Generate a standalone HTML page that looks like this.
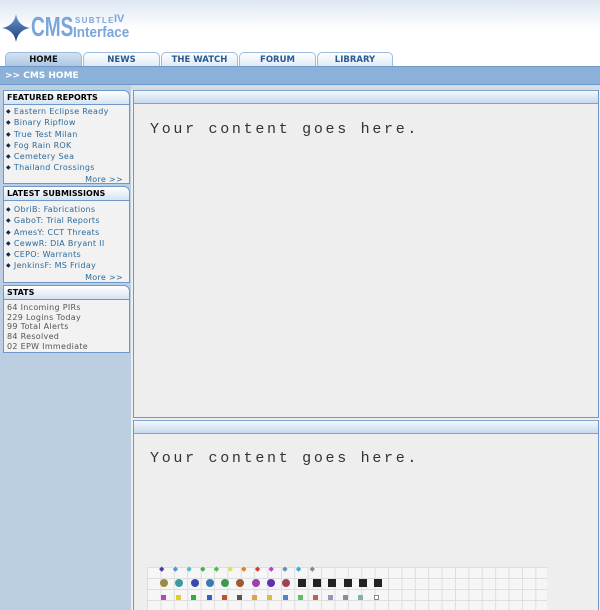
<!DOCTYPE html>
<html><head><meta charset="utf-8"><style>
*{margin:0;padding:0;box-sizing:border-box}
body{width:600px;height:610px;overflow:hidden;background:#eeeeee;font-family:"DejaVu Sans","Liberation Sans",sans-serif;position:relative}
.hdr{position:absolute;left:0;top:0;width:600px;height:66px;background:linear-gradient(#dde7f3,#ffffff 45%,#fff)}
.logo{position:absolute;left:31px;top:11px;font:bold 28px "Liberation Sans",sans-serif;color:#7aa6da;transform:scaleX(.68);transform-origin:left}
.sub{position:absolute;left:75px;top:16px;font:bold 8px "Liberation Sans",sans-serif;color:#7aa6da;letter-spacing:1.3px}
.iv{position:absolute;left:114px;top:13px;font:bold 11px "Liberation Sans",sans-serif;color:#7aa6da}
.intf{position:absolute;left:73px;top:24px;font:bold 15px "Liberation Sans",sans-serif;color:#7aa6da;transform:scaleX(.9);transform-origin:left}
.tab{position:absolute;top:52px;height:15px;border:1px solid #9dbbe0;border-bottom:none;border-radius:5px 5px 0 0;background:linear-gradient(#fff,#dde8f4);font:bold 8.5px "DejaVu Sans",sans-serif;color:#2a5a92;text-align:center;line-height:15px}
.tab.on{background:linear-gradient(#d4e2f1,#a9c4e3);color:#111}
.nav{position:absolute;left:0;top:66px;width:600px;height:19px;background:#8cb1d8;border-top:1px solid #6f98c8;border-bottom:1px solid #6f98c8;color:#fff;font:bold 9px "DejaVu Sans",sans-serif;line-height:18px;padding-left:5px}
.side{position:absolute;left:0;top:85px;width:131px;height:525px;background:#bccee2}
.strip{position:absolute;left:131px;top:85px;width:469px;height:5px;background:#d4dde6}
.box{position:absolute;left:3px;width:127px;border:1px solid #6f98c8;border-radius:0 6px 0 0;background:#f2f2f2}
.box h3{height:14px;border-bottom:1px solid #6f98c8;background:linear-gradient(#fff,#d6e3f2);font:bold 8px "DejaVu Sans",sans-serif;color:#000;line-height:14px;padding-left:3px;border-radius:0 6px 0 0}
.box ul{list-style:none;padding:1px 0 0 2px}
.box li{font:8px "DejaVu Sans",sans-serif;letter-spacing:.3px;color:#2d6b9a;height:11.3px;line-height:11px;white-space:nowrap}
.box li:before{content:"◆";font-size:6px;color:#0e2a55;margin-right:3px;vertical-align:1px}
.more{font:8px "DejaVu Sans",sans-serif;letter-spacing:.3px;color:#2d6b9a;text-align:right;padding-right:6px;line-height:11px}
.stats div{font:8px "DejaVu Sans",sans-serif;letter-spacing:.3px;color:#555;line-height:9.7px;padding-left:3px}
.panel{position:absolute;left:133px;width:466px;background:#eeeeee;border:1px solid #6f98c8;border-top:none}
.ph{height:14px;background:linear-gradient(#f4f8fc,#c6d9ee);border-top:1px solid #7ea3d0;border-bottom:1px solid #7ea3d0}
.txt{position:absolute;left:16px;font:15px "Liberation Mono",monospace;color:#333;letter-spacing:2.7px}
.grid{position:absolute;left:147px;top:567px;width:400px;height:43px;background-color:#f6f6f6;background-image:linear-gradient(90deg,#dedede 1px,transparent 1px),linear-gradient(#dedede 1px,transparent 1px);background-size:13.4px 100%,100% 11px}
.row{position:absolute;white-space:nowrap;font-size:0;line-height:0}
.row span{display:inline-block}
.b span{width:8px;height:8px;border-radius:50%;margin-right:7.3px}
.b span.q{border-radius:0;background:#222}
.s span{width:5px;height:5px;margin-right:10.2px}
</style></head><body>
<div class="hdr"></div>
<svg style="position:absolute;left:2px;top:14px" width="28" height="28" viewBox="0 0 28 28"><defs><linearGradient id="g" x1="0" y1="0" x2="0" y2="1"><stop offset="0" stop-color="#6a9ad2"/><stop offset="1" stop-color="#1b3d78"/></linearGradient></defs><path d="M14 0 Q16 12 28 14 Q16 16 14 28 Q12 16 0 14 Q12 12 14 0Z" fill="url(#g)"/></svg>
<div class="logo">CMS</div>
<div class="sub">SUBTLE</div><div class="iv">IV</div>
<div class="intf">Interface</div>
<div class="tab on" style="left:5px;width:77px">HOME</div>
<div class="tab" style="left:83px;width:77px">NEWS</div>
<div class="tab" style="left:161px;width:77px">THE WATCH</div>
<div class="tab" style="left:239px;width:77px">FORUM</div>
<div class="tab" style="left:317px;width:76px">LIBRARY</div>
<div class="nav">&gt;&gt; CMS HOME</div>
<div class="side"></div>
<div class="strip"></div>
<div class="box" style="top:90px;height:94px"><h3>FEATURED REPORTS</h3><ul>
<li>Eastern Eclipse Ready</li><li>Binary Ripflow</li><li>True Test Milan</li><li>Fog Rain ROK</li><li>Cemetery Sea</li><li>Thailand Crossings</li></ul><div class="more">More &gt;&gt;</div></div>
<div class="box" style="top:186px;height:97px"><h3>LATEST SUBMISSIONS</h3><ul style="padding-top:3px">
<li>ObriB: Fabrications</li><li>GaboT: Trial Reports</li><li>AmesY: CCT Threats</li><li>CewwR: DIA Bryant II</li><li>CEPO: Warrants</li><li>JenkinsF: MS Friday</li></ul><div class="more">More &gt;&gt;</div></div>
<div class="box stats" style="top:285px;height:68px"><h3>STATS</h3><div style="height:3px"></div>
<div>64 Incoming PIRs</div><div>229 Logins Today</div><div>99 Total Alerts</div><div>84 Resolved</div><div>02 EPW Immediate</div></div>
<div class="panel" style="top:90px;height:328px"><div class="ph"></div><div class="txt" style="top:31px">Your content goes here.</div></div>
<div class="panel" style="top:420px;height:190px;border-bottom:none"><div class="ph"></div><div class="txt" style="top:30px">Your content goes here.</div></div>
<div class="grid"></div>
<div style="position:absolute;left:159px;top:565px;font-size:7px;line-height:8px;letter-spacing:8.3px;white-space:nowrap"><span style="color:#4a3aa0">◆</span><span style="color:#4a9ad0">◆</span><span style="color:#4ac0c0">◆</span><span style="color:#40b040">◆</span><span style="color:#40c040">◆</span><span style="color:#e0e040">◆</span><span style="color:#e08020">◆</span><span style="color:#d04030">◆</span><span style="color:#c040c0">◆</span><span style="color:#6a8ab0">◆</span><span style="color:#30b0e0">◆</span><span style="color:#888">◆</span></div>
<div class="row b" style="left:160px;top:579px"><span style="background:#9a8a40"></span><span style="background:#3a9aa0"></span><span style="background:#3a4ab0"></span><span style="background:#3a7ab0"></span><span style="background:#3a9a50"></span><span style="background:#a05a30"></span><span style="background:#a040b0"></span><span style="background:#6030b0"></span><span style="background:#a04050"></span><span class="q"></span><span class="q"></span><span class="q"></span><span class="q"></span><span class="q"></span><span class="q"></span></div>
<div class="row s" style="left:161px;top:595px"><span style="background:#c040c0"></span><span style="background:#e0d020"></span><span style="background:#30b030"></span><span style="background:#3060d0"></span><span style="background:#c05030"></span><span style="background:#555"></span><span style="background:#e0a050"></span><span style="background:#d0c040"></span><span style="background:#5080d0"></span><span style="background:#60c060"></span><span style="background:#c06050"></span><span style="background:#a090c0"></span><span style="background:#8090a0"></span><span style="background:#80b0b0"></span><span style="background:#fff;border:1px solid #888"></span></div>
</body></html>
